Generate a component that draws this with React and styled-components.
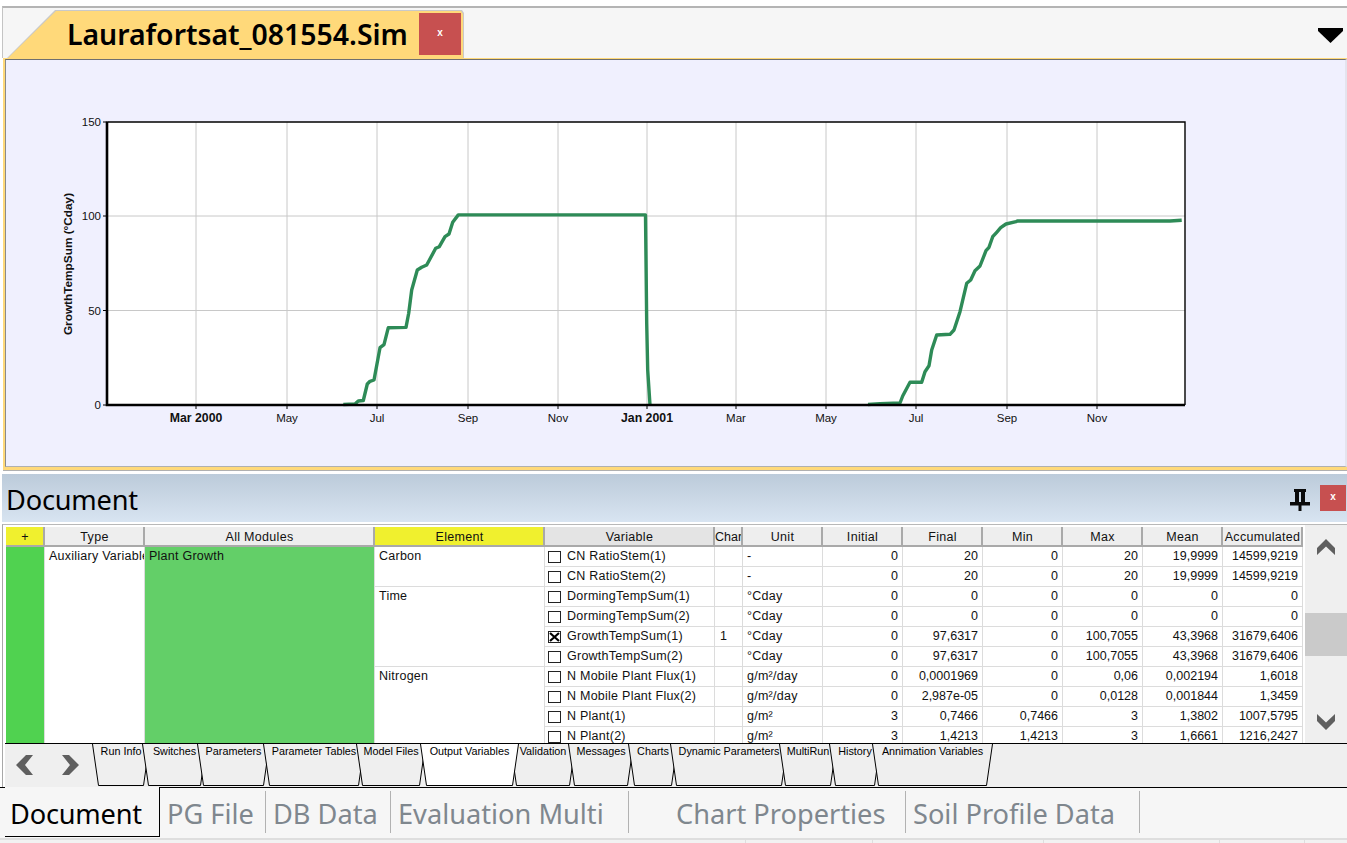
import styled, { createGlobalStyle } from "styled-components";

const GlobalStyle = createGlobalStyle`
  html, body {
    margin: 0;
    padding: 0;
    background: #fff;
  }
  * {
    box-sizing: border-box;
  }
`;

const uiFont = `"Noto Sans", "Open Sans", sans-serif`;
const gridFont = `"Liberation Sans", Arial, sans-serif`;

const Page = styled.div`
  width: 1347px;
  height: 843px;
  overflow: hidden;
  display: flex;
  flex-direction: column;
  padding-top: 6px;
  background: #fff;
`;

const TopStrip = styled.div`
  height: 52px;
  flex: none;
  margin-left: 2px;
  display: flex;
  align-items: flex-end;
  justify-content: space-between;
  padding-left: 4px;
  padding-right: 4px;
  background: #f6f6f6;
  border-top: 2px solid #b4b4b4;
  border-left: 1px solid #c4c4c4;
`;

const SimTabEdge = styled.div`
  width: 457px;
  height: 48px;
  padding: 1px 1px 0 1px;
  background: #c9c9c9;
  clip-path: polygon(0 100%, 48px 0, 455px 0, 100% 3px, 100% 100%);
`;

const SimTab = styled.div`
  height: 100%;
  display: flex;
  align-items: flex-start;
  padding: 2px 2px 0 59px;
  background: #ffd97a;
  clip-path: polygon(0 100%, 48px 0, 453px 0, 100% 3px, 100% 100%);
`;

const SimTitle = styled.span`
  flex: 1;
  font: 600 28.4px/42px ${uiFont};
  color: #000;
  white-space: nowrap;
`;

const CloseButton = styled.button`
  width: ${({ $w }) => $w}px;
  height: ${({ $h }) => $h}px;
  flex: none;
  padding: 0 0 2px;
  border: none;
  background: #c75050;
  color: #fff;
  font: 700 10px/1 ${gridFont};
`;

const MenuArrow = styled.svg`
  width: 25px;
  height: 15px;
  margin-bottom: 15px;
`;

const ChartFrame = styled.div`
  height: 412px;
  flex: none;
  margin-left: 3px;
  border: solid #ffd97a;
  border-width: 1px 0 3px 2px;
  box-shadow: 0 1px 0 #b0b0b0;
`;

const ChartInner = styled.div`
  height: 100%;
  background: #f0f0fe;
  border-top: 1px solid #6f6f6f;
  border-left: 1px solid #8a8a8a;
  border-bottom: 1px solid #b0b0b0;
  border-right: 2px solid #e4e4ee;
`;

const ChartSvg = styled.svg`
  display: block;
  width: 100%;
  height: 100%;
`;

const DocHeader = styled.div`
  height: 48px;
  flex: none;
  margin-top: 4px;
  margin-left: 2px;
  padding-right: 1px;
  display: flex;
  align-items: center;
  padding-left: 4px;
  background: linear-gradient(#bccbda, #d8e4f1);
`;

const DocTitle = styled.span`
  flex: 1;
  padding-top: 4px;
  font: 400 27.2px/1 ${uiFont};
  letter-spacing: -0.2px;
  color: #000;
`;

const PinIcon = styled.svg`
  width: 20px;
  height: 22px;
  margin-right: 10px;
  margin-top: 4px;
`;

const DocBody = styled.div`
  height: 263px;
  flex: none;
  margin-top: 2px;
  margin-left: 2px;
  display: flex;
  flex-direction: column;
  border-top: 1px solid #b8b8b8;
  border-left: 1px solid #a8a8a8;
`;

const TableRow = styled.div`
  height: 218px;
  flex: none;
  display: flex;
  padding-left: 3px;
`;

const TableClip = styled.div`
  width: 1297px;
  height: 218px;
  flex: none;
  padding-top: 2px;
  overflow: hidden;
  background: #fff;
`;

const Grid = styled.div`
  display: grid;
  grid-template-columns: 39px 100px 230px 170px 170px 28px repeat(7, 80px);
  grid-auto-rows: 20px;
  font: 400 12.5px/19px ${gridFont};
  color: #111;
`;

const HeadCell = styled.div`
  overflow: hidden;
  white-space: nowrap;
  text-align: center;
  padding-left: ${({ $tight }) => ($tight ? "0" : "1px")};
  line-height: 21px;
  letter-spacing: ${({ $tight }) => ($tight ? "0" : "0.3px")};
  background: ${({ $bg }) => $bg || "#eeeeee"};
  border-right: 2px solid #a9a9a9;
  border-bottom: 2px solid #a9a9a9;
`;

const Cell = styled.div`
  display: flex;
  align-items: flex-start;
  justify-content: ${({ $right }) => ($right ? "flex-end" : "flex-start")};
  gap: 6px;
  overflow: hidden;
  white-space: nowrap;
  letter-spacing: ${({ $right }) => ($right ? "0" : "0.25px")};
  padding: 0 ${({ $right }) => ($right ? "4px" : "0")} 0 ${({ $pad }) => $pad ?? 4}px;
  grid-row: span ${({ $span }) => $span || 1};
  background: ${({ $bg }) => $bg || "#fff"};
  border-right: 1px solid #dcdcdc;
  border-bottom: 1px solid #dcdcdc;
`;

const Check = styled.span`
  width: 13px;
  height: 12px;
  flex: none;
  margin-top: 4px;
  border: 1px solid #222;
  background: #fff;
  display: flex;
`;

const ScrollBar = styled.div`
  width: 42px;
  flex: none;
  margin-left: 2px;
  display: flex;
  flex-direction: column;
  align-items: center;
  padding-top: 14px;
  background: #efefef;
`;

const Chevron = styled.svg`
  width: ${({ $w }) => $w}px;
  height: ${({ $h }) => $h}px;
  flex: none;
`;

const ScrollThumb = styled.div`
  width: 100%;
  height: 43px;
  flex: none;
  margin-top: 58px;
  margin-bottom: 58px;
  background: #cacaca;
`;

const TabBar = styled.div`
  height: 44px;
  flex: none;
  margin-left: 2px;
  display: flex;
  background: #efefef;
  border-top: 1px solid #000;
`;

const TabArrows = styled.div`
  width: 87px;
  flex: none;
  display: flex;
  align-items: flex-start;
  gap: 29px;
  padding: 11px 0 0 11px;
`;

const SheetTab = styled.div`
  position: relative;
  width: ${({ $w }) => $w}px;
  height: 42px;
  flex: none;
  margin-left: ${({ $gap }) => $gap}px;
  z-index: ${({ $z }) => $z};
  font: 400 10.8px/14px ${gridFont};
  text-align: center;
  color: #000;
  white-space: nowrap;
`;

const SheetShape = styled.svg`
  position: absolute;
  inset: 0;
`;

const SheetLabel = styled.span`
  position: relative;
`;

const DockTabs = styled.div`
  height: 51px;
  flex: none;
  display: flex;
  background: #f6f6f6;
  box-shadow: inset 0 1px 0 #000;
`;

const ActiveDockTab = styled.div`
  width: 155px;
  height: 50px;
  margin-left: 5px;
  padding-left: 5px;
  flex: none;
  font: 400 27.2px/54px ${uiFont};
  letter-spacing: -0.2px;
  color: #000;
  background: #f6f6f6;
  border-right: 1px solid #000;
  border-bottom: 1px solid #000;
`;

const DockTab = styled.div`
  width: ${({ $w }) => $w}px;
  height: 42px;
  flex: none;
  margin-top: 4px;
  padding-left: ${({ $pad }) => $pad}px;
  font: 400 27.2px/46px ${uiFont};
  white-space: nowrap;
  color: #7f878e;
  border-right: 1px solid #b2b2b2;
`;

const StatusBar = styled.div`
  flex: 1;
  display: flex;
  background: #f2f2f2;
  border-top: 2px solid #dedede;
`;

const StatusCell = styled.div`
  width: ${({ $w }) => $w}px;
  flex: none;
  border-right: 1px solid #dedede;
`;

const yTicks = [
  { label: "150", y: 122 },
  { label: "100", y: 216 },
  { label: "50", y: 310.5 },
  { label: "0", y: 405 },
];

const xTicks = [
  { label: "Mar 2000", x: 196, bold: true },
  { label: "May", x: 287 },
  { label: "Jul", x: 377 },
  { label: "Sep", x: 468 },
  { label: "Nov", x: 558 },
  { label: "Jan 2001", x: 647, bold: true },
  { label: "Mar", x: 736 },
  { label: "May", x: 826 },
  { label: "Jul", x: 916 },
  { label: "Sep", x: 1007 },
  { label: "Nov", x: 1097 },
];

const curves = [
  [
    [343.3, 404.5], [355, 404], [358.3, 401], [363.3, 400.5], [367.3, 384], [370, 381.3],
    [374, 380], [380, 347.7], [384, 344.7], [388.3, 327.7], [406, 327.4], [408.7, 313.3], [411.7, 290],
    [417.3, 270], [421.7, 267.3], [426.7, 265], [435.7, 248.3], [439.3, 246.7], [445, 236.7], [449, 234],
    [452.7, 222.3], [458.3, 214.9], [645.5, 214.9], [646.7, 323], [647.7, 370], [650, 405],
  ],
  [
    [868, 404.5], [880, 403.6], [900, 403], [902.7, 396], [910, 382.3], [921.7, 382.3], [925, 371.7],
    [929, 365.7], [931.7, 350], [936.7, 335], [950, 334.3], [954, 330], [960, 311.7], [966.7, 283.3],
    [970.7, 280], [975, 270.7], [980, 266], [986, 250.7], [989, 247.3], [992.7, 236.7], [996.7, 232.3],
    [1000.7, 227.7], [1006, 224], [1016, 221.7], [1017.3, 221], [1170, 221], [1181.7, 220.3],
  ],
];

const columns = [
  { label: "+", bg: "#f0f02e" },
  { label: "Type" },
  { label: "All Modules" },
  { label: "Element", bg: "#f0f02e" },
  { label: "Variable", bg: "#e4e4e4" },
  { label: "Chart", tight: true },
  { label: "Unit" },
  { label: "Initial" },
  { label: "Final" },
  { label: "Min" },
  { label: "Max" },
  { label: "Mean" },
  { label: "Accumulated" },
];

const groups = [
  {
    element: "Carbon",
    rows: [
      ["CN RatioStem(1)", "", "-", "0", "20", "0", "20", "19,9999", "14599,9219"],
      ["CN RatioStem(2)", "", "-", "0", "20", "0", "20", "19,9999", "14599,9219"],
    ],
  },
  {
    element: "Time",
    rows: [
      ["DormingTempSum(1)", "", "°Cday", "0", "0", "0", "0", "0", "0"],
      ["DormingTempSum(2)", "", "°Cday", "0", "0", "0", "0", "0", "0"],
      ["GrowthTempSum(1)", "1", "°Cday", "0", "97,6317", "0", "100,7055", "43,3968", "31679,6406"],
      ["GrowthTempSum(2)", "", "°Cday", "0", "97,6317", "0", "100,7055", "43,3968", "31679,6406"],
    ],
  },
  {
    element: "Nitrogen",
    rows: [
      ["N Mobile Plant Flux(1)", "", "g/m²/day", "0", "0,0001969", "0", "0,06", "0,002194", "1,6018"],
      ["N Mobile Plant Flux(2)", "", "g/m²/day", "0", "2,987e-05", "0", "0,0128", "0,001844", "1,3459"],
      ["N Plant(1)", "", "g/m²", "3", "0,7466", "0,7466", "3", "1,3802", "1007,5795"],
      ["N Plant(2)", "", "g/m²", "3", "1,4213", "1,4213", "3", "1,6661", "1216,2427"],
    ],
  },
];

// bl / br = bottom corners of each sheet tab, in page px
const sheetTabs = [
  { label: "Run Info", bl: 98, br: 144 },
  { label: "Switches", bl: 148, br: 201 },
  { label: "Parameters", bl: 203, br: 264 },
  { label: "Parameter Tables", bl: 269, br: 359 },
  { label: "Model Files", bl: 362, br: 420 },
  { label: "Output Variables", bl: 426, br: 513, active: true },
  { label: "Validation", bl: 516, br: 570 },
  { label: "Messages", bl: 574, br: 628 },
  { label: "Charts", bl: 634, br: 672 },
  { label: "Dynamic Parameters", bl: 676, br: 782 },
  { label: "MultiRun", bl: 785, br: 831 },
  { label: "History", bl: 835, br: 875 },
  { label: "Annimation Variables", bl: 878, br: 987 },
];

const dockTabs = [
  { label: "PG File", w: 106, pad: 7 },
  { label: "DB Data", w: 125, pad: 7 },
  { label: "Evaluation Multi", w: 238, pad: 7 },
  { label: "Chart Properties", w: 277, pad: 47 },
  { label: "Soil Profile Data", w: 234, pad: 7 },
];

function SimChart() {
  return (
    <ChartSvg viewBox="6 60 1339 406" preserveAspectRatio="none">
      <rect x="107" y="122" width="1078" height="283" fill="#fff" />
      {yTicks.slice(1, 3).map((t) => (
        <line key={t.label} x1="107" x2="1185" y1={t.y} y2={t.y} stroke="#c8c8c8" />
      ))}
      {xTicks.map((t) => (
        <line key={t.x} x1={t.x} x2={t.x} y1="122" y2="405" stroke="#c8c8c8" />
      ))}
      {curves.map((c, i) => (
        <polyline
          key={i}
          points={c.map((p) => p.join(",")).join(" ")}
          fill="none"
          stroke="#2e8b57"
          strokeWidth="3.4"
          strokeLinejoin="round"
        />
      ))}
      <path d="M107.5 122H1185V405" fill="none" stroke="#000" strokeWidth="1.4" />
      <path d="M107 121.5V405H1185" fill="none" stroke="#000" strokeWidth="2.6" />
      {yTicks.map((t) => (
        <g key={t.label}>
          <line x1="103" x2="107" y1={t.y} y2={t.y} stroke="#000" />
          <text
            x="101"
            y={t.y + 4}
            textAnchor="end"
            fontFamily={gridFont}
            fontSize="11.5"
            fill="#111"
          >
            {t.label}
          </text>
        </g>
      ))}
      {xTicks.map((t) => (
        <g key={t.x}>
          <line x1={t.x} x2={t.x} y1="405" y2="409" stroke="#000" />
          <text
            x={t.x}
            y="422"
            textAnchor="middle"
            fontFamily={gridFont}
            fontSize={t.bold ? "12.3" : "11.5"}
            fontWeight={t.bold ? 700 : 400}
            fill="#111"
          >
            {t.label}
          </text>
        </g>
      ))}
      <text
        transform="translate(72 264) rotate(-90)"
        textAnchor="middle"
        fontFamily={gridFont}
        fontSize="11.8"
        fontWeight="700"
        fill="#111"
      >
        GrowthTempSum (°Cday)
      </text>
    </ChartSvg>
  );
}

function UpChevron() {
  return (
    <Chevron $w={18} $h={16} viewBox="0 0 18 16">
      <path d="M0 9 9 0l9 9v7L9 7.500 0 16z" fill="#5f5f5f" />
    </Chevron>
  );
}

function DownChevron() {
  return (
    <Chevron $w={18} $h={16} viewBox="0 0 18 16">
      <path d="M0 0 9 8.500 18 0v7l-9 9-9-9z" fill="#5f5f5f" />
    </Chevron>
  );
}

function SideChevron({ flip }) {
  return (
    <Chevron $w={17} $h={20} viewBox="0 0 17 20">
      <path
        d={flip ? "M0 0h7l10 10-10 10H0l8-10z" : "M17 0h-7L0 10l10 10h7L9 10z"}
        fill="#5f5f5f"
      />
    </Chevron>
  );
}

function CheckMark({ on }) {
  return (
    <Check>
      {on && (
        <svg width="11" height="10" viewBox="0 0 11 10">
          <path d="M1 1 10 9M10 1 1 9" stroke="#000" strokeWidth="2.2" />
        </svg>
      )}
    </Check>
  );
}

function DataTable() {
  return (
    <Grid>
      {columns.map((c) => (
        <HeadCell key={c.label} $bg={c.bg} $tight={c.tight}>
          {c.label}
        </HeadCell>
      ))}
      <Cell $span={10} $bg="#50d250" />
      <Cell $span={10}>Auxiliary Variables</Cell>
      <Cell $span={10} $bg="#63cf68">
        Plant Growth
      </Cell>
      {groups.map((g) => (
        <GroupRows key={g.element} group={g} />
      ))}
    </Grid>
  );
}

function GroupRows({ group }) {
  return (
    <>
      <Cell $span={group.rows.length}>{group.element}</Cell>
      {group.rows.map((r) => (
        <DataRow key={r[0]} row={r} />
      ))}
    </>
  );
}

function DataRow({ row }) {
  const [name, chart, unit, ...values] = row;
  return (
    <>
      <Cell $pad={3}>
        <CheckMark on={chart === "1"} />
        {name}
      </Cell>
      <Cell $pad={5}>{chart}</Cell>
      <Cell>{unit}</Cell>
      {values.map((v, i) => (
        <Cell key={i} $right>
          {v}
        </Cell>
      ))}
    </>
  );
}

function SheetTabs() {
  return sheetTabs.map((t, i) => {
    const w = t.br - t.bl + 12;
    const gap = i === 0 ? 0 : t.bl - sheetTabs[i - 1].br - 12;
    return (
      <SheetTab key={t.label} $w={w} $gap={gap} $z={t.active ? 50 : i + 1}>
        <SheetShape width={w} height={42} viewBox={`0 0 ${w} 42`}>
          <polygon
            points={`0.5,0 6.5,41.5 ${w - 6.5},41.5 ${w - 0.5},0`}
            fill={t.active ? "#fff" : "#efefef"}
          />
          <polyline
            points={`0.5,0 6.5,41.5 ${w - 6.5},41.5 ${w - 0.5},0`}
            fill="none"
            stroke="#000"
          />
        </SheetShape>
        <SheetLabel>{t.label}</SheetLabel>
      </SheetTab>
    );
  });
}

export default function App() {
  return (
    <Page>
      <GlobalStyle />
      <TopStrip>
        <SimTabEdge>
          <SimTab>
            <SimTitle>Laurafortsat_081554.Sim</SimTitle>
            <CloseButton $w={42} $h={42}>
              x
            </CloseButton>
          </SimTab>
        </SimTabEdge>
        <MenuArrow viewBox="0 0 25 15">
          <path d="M0 0h25v3L12.500 15 0 3z" fill="#000" />
        </MenuArrow>
      </TopStrip>
      <ChartFrame>
        <ChartInner>
          <SimChart />
        </ChartInner>
      </ChartFrame>
      <DocHeader>
        <DocTitle>Document</DocTitle>
        <PinIcon viewBox="0 0 20 22">
          <path
            d="M4 0h12v3h-1v10h5v3.500H11.500V22h-3v-5.500H0V13h5V3H4zM9 3v10h2V3z"
            fill="#0a0a0a"
            fillRule="evenodd"
          />
        </PinIcon>
        <CloseButton $w={26} $h={26}>
          x
        </CloseButton>
      </DocHeader>
      <DocBody>
        <TableRow>
          <TableClip>
            <DataTable />
          </TableClip>
          <ScrollBar>
            <UpChevron />
            <ScrollThumb />
            <DownChevron />
          </ScrollBar>
        </TableRow>
        <TabBar>
          <TabArrows>
            <SideChevron />
            <SideChevron flip />
          </TabArrows>
          <SheetTabs />
        </TabBar>
      </DocBody>
      <DockTabs>
        <ActiveDockTab>Document</ActiveDockTab>
        {dockTabs.map((t) => (
          <DockTab key={t.label} $w={t.w} $pad={t.pad}>
            {t.label}
          </DockTab>
        ))}
      </DockTabs>
      <StatusBar>
        <StatusCell $w={746} />
        <StatusCell $w={127} />
        <StatusCell $w={171} />
        <StatusCell $w={176} />
        <StatusCell $w={85} />
      </StatusBar>
    </Page>
  );
}
